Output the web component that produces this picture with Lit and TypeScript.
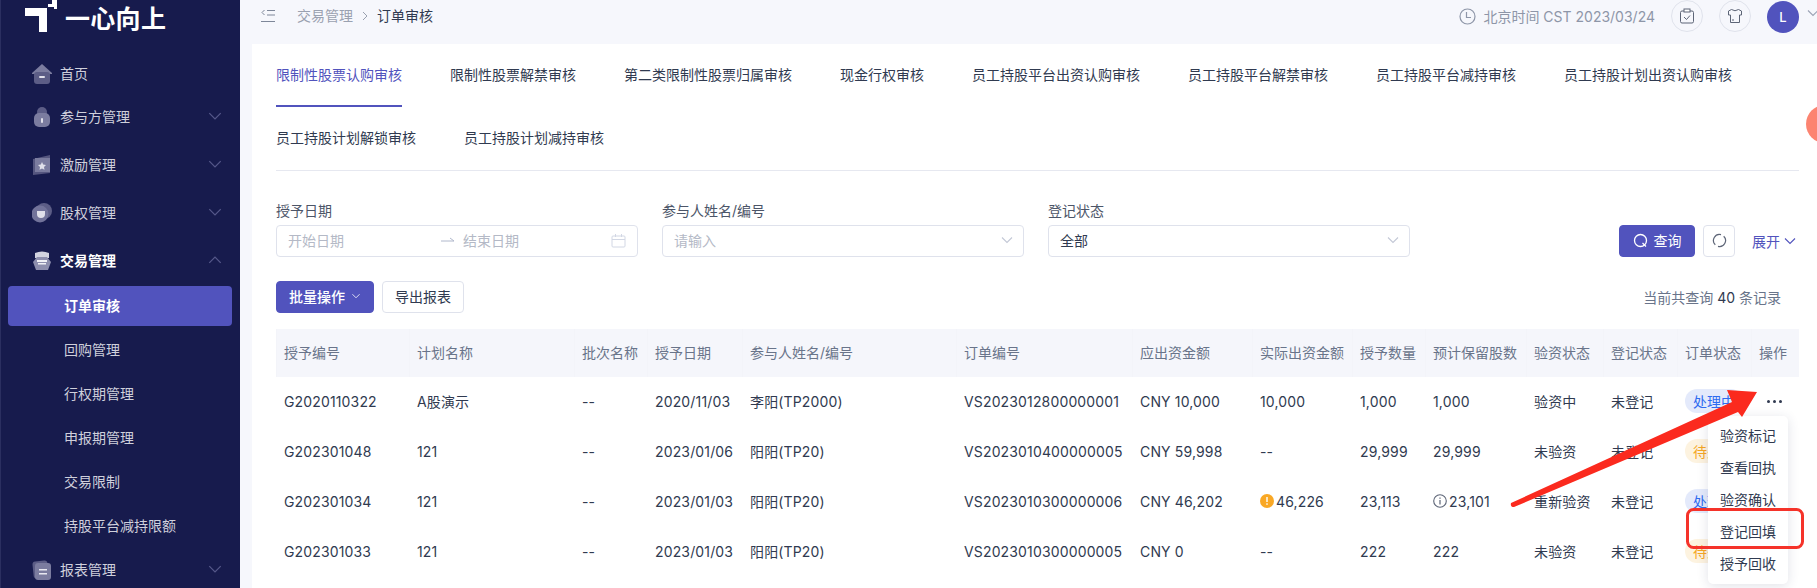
import { LitElement, html, css, svg } from "lit";
import { customElement } from "lit/decorators.js";

const chevron = (up = false) => html`<svg class="chev" viewBox="0 0 14 14"><path d=${up ? "M2 9.5 7 4.5l5 5" : "M2 4.5 7 9.5l5-5"} fill="none" stroke="currentColor" stroke-width="1.1"/></svg>`;

const icons: Record<string, unknown> = {
  home: svg`<path d="M10 0 20 9v1H0V9z" fill="#7b7c9f"/><rect x="2" y="8" width="16" height="12" rx="3" fill="#5c5d86"/><rect x="7" y="12" width="6" height="2" rx="1" fill="#e0e0ea"/>`,
  person: svg`<circle cx="10" cy="5" r="5" fill="#5c5d86"/><rect x="2" y="6" width="16" height="14" rx="5" fill="#7b7c9f"/><rect x="9" y="11" width="2" height="5" rx="1" fill="#e0e0ea"/>`,
  award: svg`<path d="M1 4 18 0v18L1 20z" fill="#55567f"/><rect x="3" y="3" width="15" height="14" fill="#7b7c9f"/><path d="m10 7 1.2 2.5 2.8.4-2 2 .5 2.8-2.5-1.3-2.5 1.3.5-2.8-2-2 2.800-.4z" fill="#e0e0ea"/>`,
  pie: svg`<circle cx="12" cy="8" r="8" fill="#5c5d86"/><circle cx="8" cy="11" r="8.500" fill="#72739a"/><path d="M5 8h8v3a4 4 0 0 1-8 0z" fill="#e0e0ea"/>`,
  trade: svg`<path d="M3 2q7-3 14 0v5H3z" fill="#d2d3e0"/><path d="M5 6h10l4 5-3 8H4l-3-8z" fill="#8e8fae"/><rect x="5" y="9" width="10" height="2" fill="#f2f2f6"/><rect x="6" y="12" width="8" height="1.500" fill="#f2f2f6"/>`,
  report: svg`<rect x="1" y="1" width="15" height="17" rx="3" fill="#5c5d86" transform="rotate(-6 8 9)"/><rect x="3" y="3" width="16" height="17" rx="3" fill="#7b7c9f"/><rect x="7" y="9" width="8" height="1.500" fill="#e8e8f0"/><rect x="7" y="13" width="8" height="1.500" fill="#e8e8f0"/>`,
};

const menu = [
  { icon: "home", label: "首页" },
  { icon: "person", label: "参与方管理", arrow: "down" },
  { icon: "award", label: "激励管理", arrow: "down" },
  { icon: "pie", label: "股权管理", arrow: "down" },
  { icon: "trade", label: "交易管理", arrow: "up", open: true },
];
const subs = ["订单审核", "回购管理", "行权期管理", "申报期管理", "交易限制", "持股平台减持限额"];
const tabs = ["限制性股票认购审核", "限制性股票解禁审核", "第二类限制性股票归属审核", "现金行权审核", "员工持股平台出资认购审核", "员工持股平台解禁审核", "员工持股平台减持审核", "员工持股计划出资认购审核", "员工持股计划解锁审核", "员工持股计划减持审核"];
const heads = ["授予编号", "计划名称", "批次名称", "授予日期", "参与人姓名/编号", "订单编号", "应出资金额", "实际出资金额", "授予数量", "预计保留股数", "验资状态", "登记状态", "订单状态", "操作"];
const rows = [
  ["G2020110322", "A股演示", "--", "2020/11/03", "李阳(TP2000)", "VS2023012800000001", "CNY 10,000", "10,000", "1,000", "1,000", "验资中", "未登记", "处理中", "dots"],
  ["G202301048", "121", "--", "2023/01/06", "阳阳(TP20)", "VS2023010400000005", "CNY 59,998", "--", "29,999", "29,999", "未验资", "未登记", "待处理", ""],
  ["G202301034", "121", "--", "2023/01/03", "阳阳(TP20)", "VS2023010300000006", "CNY 46,202", "!46,226", "23,113", "i23,101", "重新验资", "未登记", "处理中", ""],
  ["G202301033", "121", "--", "2023/01/03", "阳阳(TP20)", "VS2023010300000005", "CNY 0", "--", "222", "222", "未验资", "未登记", "待处理", ""],
];

@customElement("app-root")
export class AppRoot extends LitElement {
  static styles = css`
    :host { display: flex; width: 1817px; height: 588px; overflow: hidden; position: relative; background: #f6f7fc;
      font-family: Inter, "Noto Sans CJK SC", sans-serif; font-size: 14px; color: #303a50; }
    * { box-sizing: border-box; }
    .side { width: 240px; height: 588px; flex: none; background: #171b4d; color: #cfd0dc; overflow: hidden; border-left: 1px solid #2b2f60; }
    .logo { height: 54px; display: flex; align-items: flex-start; padding-left: 24px; gap: 6px; }
    .logo svg { width: 34px; height: 32px; flex: none; }
    .logo span { color: #fff; font-size: 25px; font-weight: 700; line-height: 28px; margin-top: 5px; letter-spacing: 0.3px; }
    .item { height: 48px; display: flex; align-items: center; padding: 0 17px 0 31px; gap: 8px; }
    .item svg.ic { width: 20px; height: 20px; flex: none; }
    .item .t { flex: 1; padding-bottom: 2px; }
    .item.open { color: #fff; font-weight: 700; }
    .item.first { height: 39px; }
    .item.last { height: 44px; }
    .chev { width: 14px; height: 14px; flex: none; }
    .item .chev { width: 16px; height: 16px; color: #56588a; margin-top: -2px; }
    .sub { height: 44px; margin: 0 8px 0 7px; padding: 0 0 2px 56px; display: flex; align-items: center; border-radius: 4px; }
    .sub.on { height: 40px; margin-top: 1px; margin-bottom: 2px; background: #5153bd; color: #fff; font-weight: 700; }
    .main { flex: 1; min-width: 0; display: flex; flex-direction: column; padding-left: 12px; }
    .top { height: 44px; flex: none; display: flex; align-items: flex-start; padding: 8px 0 0 9px; }
    .crumb { display: flex; align-items: center; gap: 7px; height: 16px; line-height: 16px; color: #9aa1b0; }
    .crumb .tog { width: 14px; height: 14px; margin-right: 15px; color: #7e8799; flex: none; }
    .crumb .cur { color: #303a50; }
    .crumb .sep { width: 10px; height: 10px; }
    .tr { margin-left: auto; display: flex; align-items: center; height: 32px; margin-top: -8px; color: #8e96a8; }
    .tr .clock { width: 17px; height: 17px; margin-right: 7px; }
    .tr .circ { width: 32px; height: 32px; border: 1px solid #e0e3ec; border-radius: 50%; display: flex; align-items: center; justify-content: center; margin-left: 16px; color: #5d6577; }
    .tr .circ svg { width: 16px; height: 16px; }
    .avatar { width: 32px; height: 32px; border-radius: 50%; background: #5153bd; color: #fff; display: flex; align-items: center; justify-content: center; margin: 2px 0 0 16px; font-size: 13px; font-weight: 500; }
    .tr .chev { margin-left: 7px; margin-right: -3px; margin-top: -6px; color: #9aa2b4; }
    .card { flex: 1; background: #fff; padding: 0 18px 0 24px; min-height: 0; }
    .tabs { display: flex; flex-wrap: wrap; column-gap: 48px; border-bottom: 1px solid #e6e8f0; }
    .tab { height: 63px; display: flex; align-items: center; padding-bottom: 2px; color: #303a50; border-bottom: 2px solid transparent; }
    .tab.on { color: #5153bd; border-bottom-color: #5153bd; }
    .filters { display: flex; align-items: flex-end; margin-top: 30px; gap: 24px; }
    .field { width: 362px; display: flex; flex-direction: column; gap: 4px; }
    .field label { line-height: 20px; color: #4c5568; }
    .input { height: 32px; border: 1px solid #dfe2ec; border-radius: 4px; display: flex; align-items: center; padding: 0 11px 2px; color: #b4b9c6; }
    .input .chev { margin-left: auto; margin-right: -2px; color: #c3c8d6; }
    .input .val { color: #303a50; }
    .daterange .a { width: 153px; }
    .daterange svg.arr { width: 14px; height: 8px; color: #b0b8cc; margin-right: 8px; }
    .daterange svg.cal { margin-left: auto; width: 15px; height: 15px; color: #d2d7e4; }
    .acts { margin-left: auto; display: flex; align-items: center; height: 32px; margin-right: 2px; }
    .btn { height: 32px; border-radius: 4px; display: flex; align-items: center; justify-content: center; border: 1px solid #dfe2ec; background: #fff; color: #303a50; padding-bottom: 2px; }
    .btn.pri { background: #5153bd; border-color: #5153bd; color: #fff; }
    .q { width: 76px; gap: 6px; }
    .q svg { width: 15px; height: 15px; }
    .ref { width: 32px; margin-left: 8px; color: #5d6577; }
    .ref svg { width: 15px; height: 15px; }
    .more { color: #5153bd; margin-left: 17px; display: flex; align-items: center; gap: 3px; }
    .toolbar { display: flex; align-items: center; gap: 8px; margin-top: 24px; height: 32px; }
    .bulk { width: 98px; font-weight: 500; gap: 6px; }
    .bulk .chev { width: 10px; height: 10px; }
    .exp { width: 82px; }
    .count { margin-left: auto; margin-right: 18px; color: #69748a; }
    .count b { font-weight: 400; color: #303a50; }
    .grid { display: grid; grid-template-columns: 133px 165px 73px 95px 214px 176px 120px 100px 73px 101px 77px 74px 74px 48px; margin-top: 16px; }
    .th { height: 48px; background: #f5f6fb; display: flex; align-items: center; padding: 0 0 2px 8px; color: #69748a; white-space: nowrap; box-shadow: inset 1px 0 0 #f3f4f9; }
    .td { height: 50px; display: flex; align-items: center; padding: 0 0 2px 8px; white-space: nowrap; letter-spacing: 0.15px; }
    .tag { height: 24px; border-radius: 12px; padding: 0 8px; display: flex; align-items: center; letter-spacing: 0; }
    .tag.blue { background: #e4eafb; color: #2f6bf0; }
    .tag.org { background: #fdf3e0; color: #f5a623; }
    .dots { display: flex; gap: 3px; margin-left: 8px; }
    .dots i { width: 3px; height: 3px; border-radius: 50%; background: #303a50; }
    .cellic { width: 14px; height: 14px; margin-right: 2px; flex: none; }
    .pop { position: absolute; left: 1708px; top: 416px; width: 80px; height: 168px; background: #fff; border-radius: 5px; box-shadow: 0 2px 12px rgba(40, 50, 90, .14); padding: 4px 0; }
    .pop div { height: 32px; display: flex; align-items: center; padding: 0 0 2px 12px; color: #303a50; }
    .ball { position: absolute; left: 1806px; top: 105px; width: 38px; height: 38px; border-radius: 50%; background: #fc8471; }
    .mark { position: absolute; left: 0; top: 0; width: 1817px; height: 588px; pointer-events: none; }
  `;

  private cell(v: string) {
    if (v === "dots") return html`<div class="dots"><i></i><i></i><i></i></div>`;
    if (v === "处理中") return html`<span class="tag blue">${v}</span>`;
    if (v === "待处理") return html`<span class="tag org">${v}</span>`;
    if (v[0] === "!") return html`<svg class="cellic" viewBox="0 0 14 14"><circle cx="7" cy="7" r="7" fill="#f9a825"/><rect x="6.300" y="3" width="1.400" height="5" fill="#fff"/><rect x="6.300" y="9.300" width="1.400" height="1.500" fill="#fff"/></svg>${v.slice(1)}`;
    if (v[0] === "i") return html`<svg class="cellic" viewBox="0 0 14 14"><circle cx="7" cy="7" r="6.300" fill="none" stroke="#5d6577" stroke-width="1.100"/><rect x="6.400" y="6" width="1.200" height="4.500" fill="#5d6577"/><rect x="6.400" y="3.500" width="1.200" height="1.300" fill="#5d6577"/></svg>${v.slice(1)}`;
    return v;
  }

  render() {
    return html`
      <aside class="side">
        <div class="logo">
          <svg viewBox="0 0 34 32"><path d="M0 8h22v24h-8V16H0z" fill="#fff"/><path d="M23 4h4V0h5v9h-3V7h-6z" fill="#fff"/></svg>
          <span>一心向上</span>
        </div>
        ${menu.map((m, i) => html`<div class="item ${m.open ? "open" : ""} ${i === 0 ? "first" : ""}">
          <svg class="ic" viewBox="0 0 20 20">${icons[m.icon]}</svg><span class="t">${m.label}</span>${m.arrow ? chevron(m.arrow === "up") : ""}
        </div>`)}
        ${subs.map((s, i) => html`<div class="sub ${i === 0 ? "on" : ""}">${s}</div>`)}
        <div class="item last"><svg class="ic" viewBox="0 0 20 20">${icons.report}</svg><span class="t">报表管理</span>${chevron()}</div>
      </aside>
      <div class="main">
        <header class="top">
          <div class="crumb">
            <svg class="tog" viewBox="0 0 14 14"><path d="M3.500 1 1 3.500 3.500 6M6 1.500h8M6 6h8M0 12.500h14" fill="none" stroke="currentColor" stroke-width="1"/></svg>
            <span>交易管理</span>
            <svg class="sep" viewBox="0 0 10 10"><path d="m3 1 4 4-4 4" fill="none" stroke="currentColor"/></svg>
            <span class="cur">订单审核</span>
          </div>
          <div class="tr">
            <svg class="clock" viewBox="0 0 17 17"><circle cx="8.500" cy="8.500" r="7.500" fill="none" stroke="currentColor" stroke-width="1.200"/><path d="M7.500 4v5.500h4.500" fill="none" stroke="currentColor" stroke-width="1.200"/></svg>
            <span>北京时间 CST 2023/03/24</span>
            <span class="circ"><svg viewBox="0 0 16 16"><rect x="1.500" y="3" width="13" height="12" rx="1.500" fill="none" stroke="currentColor"/><rect x="5" y="1" width="6" height="3" fill="#fff" stroke="currentColor"/><path d="m5 9 2.500 2.500L11 7.500" fill="none" stroke="currentColor"/></svg></span>
            <span class="circ"><svg viewBox="0 0 16 16"><path d="M4.500 1.500 1.500 3v4h2v7.500h9V7h2V3l-3-1.500q-3.500 2.500-7 0z" fill="none" stroke="currentColor"/><path d="M6 11v2" stroke="currentColor"/></svg></span>
            <span class="avatar">L</span>
            ${chevron()}
          </div>
        </header>
        <section class="card">
          <nav class="tabs">${tabs.map((t, i) => html`<div class="tab ${i === 0 ? "on" : ""}">${t}</div>`)}</nav>
          <div class="filters">
            <div class="field"><label>授予日期</label>
              <div class="input daterange"><span class="a">开始日期</span>
                <svg class="arr" viewBox="0 0 14 8"><path d="M0 5h13L9 2" fill="none" stroke="currentColor"/></svg>
                <span>结束日期</span>
                <svg class="cal" viewBox="0 0 15 15"><rect x="1" y="3" width="13" height="11" rx="1" fill="none" stroke="currentColor"/><path d="M1 6.500h13M4.500 1v3M10.500 1v3" fill="none" stroke="currentColor"/></svg>
              </div></div>
            <div class="field"><label>参与人姓名/编号</label><div class="input">请输入${chevron()}</div></div>
            <div class="field"><label>登记状态</label><div class="input"><span class="val">全部</span>${chevron()}</div></div>
            <div class="acts">
              <div class="btn pri q"><svg viewBox="0 0 15 15"><circle cx="7.500" cy="7.500" r="6" fill="none" stroke="currentColor" stroke-width="1.300"/><path d="m9.500 10 3.500 3.500" stroke="currentColor" stroke-width="1.300"/></svg>查询</div>
              <div class="btn ref"><svg viewBox="0 0 15 15"><path d="M3.300 11.800A6 6 0 0 1 9 1.700M11.700 3.200A6 6 0 0 1 6 13.300" fill="none" stroke="currentColor" stroke-width="1.200"/></svg></div>
              <div class="more">展开${chevron()}</div>
            </div>
          </div>
          <div class="toolbar">
            <div class="btn pri bulk">批量操作${chevron()}</div>
            <div class="btn exp">导出报表</div>
            <div class="count">当前共查询 <b>40</b> 条记录</div>
          </div>
          <div class="grid">
            ${heads.map((h) => html`<div class="th">${h}</div>`)}
            ${rows.map((r) => r.map((c) => html`<div class="td">${this.cell(c)}</div>`))}
          </div>
        </section>
      </div>
      <div class="ball"></div>
      <div class="pop"><div>验资标记</div><div>查看回执</div><div>验资确认</div><div>登记回填</div><div>授予回收</div></div>
      <svg class="mark" viewBox="0 0 1817 588">
        <path d="M1511 503 1732 402 1727 390 1757 392 1742 417 1738 412 1514 507Q1510 507 1511 503z" fill="#fb2a1e"/>
        <rect x="1687.500" y="509.500" width="115" height="38" rx="6" fill="none" stroke="#f5332a" stroke-width="3"/>
      </svg>
    `;
  }
}
